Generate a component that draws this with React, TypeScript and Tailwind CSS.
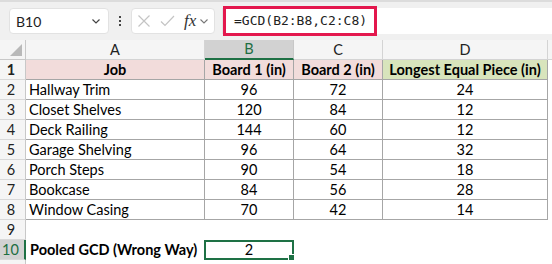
import React from "react";

const rows = [
  { job: "Hallway Trim", b1: 96, b2: 72, d: 24 },
  { job: "Closet Shelves", b1: 120, b2: 84, d: 12 },
  { job: "Deck Railing", b1: 144, b2: 60, d: 12 },
  { job: "Garage Shelving", b1: 96, b2: 64, d: 32 },
  { job: "Porch Steps", b1: 90, b2: 54, d: 18 },
  { job: "Bookcase", b1: 84, b2: 56, d: 28 },
  { job: "Window Casing", b1: 70, b2: 42, d: 14 },
];

function RowHead({ n, active }: { n: number; active?: boolean }) {
  return (
    <div
      className={
        "w-[26px] h-full shrink-0 flex items-center justify-center pr-[3px] border-b border-[#d9d9d9] " +
        (active
          ? "bg-[#d2d2d2] text-[#1e6e42] border-r-2 border-r-[#1e7145]"
          : "bg-[#f5f5f5] text-[#222] border-r border-r-[#c8c8c8]")
      }
    >
      {n}
    </div>
  );
}

export default function App() {
  return (
    <div
      className="w-[552px] h-[264px] overflow-hidden bg-white text-[14.5px] text-black"
      style={{ fontFamily: "Lato, 'Open Sans', sans-serif" }}
    >
      {/* Formula bar */}
      <div className="h-[40px] bg-[#f0f0f0] border-t-2 border-[#dcdcdc] flex items-start pt-[6px] relative">
        <div className="ml-[9px] w-[100px] h-[26px] bg-white rounded-[4px] border border-[#e2e2e2] flex items-center justify-between pl-[6px] pr-[6px] text-[14px] text-[#222]">
          <span>B10</span>
          <svg width="12" height="12" viewBox="0 0 12 12" fill="none" stroke="#444" strokeWidth="1.2">
            <path d="M2.5 4.5 L6 8 L9.5 4.5" />
          </svg>
        </div>
        <div className="w-[22px] h-[26px] flex flex-col items-center justify-center gap-[2px]">
          <span className="w-[2px] h-[2px] bg-[#444]" />
          <span className="w-[2px] h-[2px] bg-[#444]" />
          <span className="w-[2px] h-[2px] bg-[#444]" />
        </div>
        <div className="w-[84px] h-[26px] bg-white rounded-[4px] border border-[#e2e2e2] flex items-center pl-[5px] gap-[9px]">
          <svg width="14" height="14" viewBox="0 0 14 14" stroke="#c4c4c4" strokeWidth="1.2" fill="none">
            <path d="M1.5 1.5 L12.5 12.5 M12.5 1.5 L1.5 12.5" />
          </svg>
          <svg width="15" height="14" viewBox="0 0 15 14" stroke="#c4c4c4" strokeWidth="1.2" fill="none">
            <path d="M1 7.5 L5 11.5 L14 2" />
          </svg>
          <div className="flex items-center gap-[3px]">
            <span className="italic text-[17px] text-[#333]" style={{ fontFamily: "'Liberation Serif', serif" }}>
              fx
            </span>
            <svg width="10" height="10" viewBox="0 0 10 10" fill="none" stroke="#777" strokeWidth="1.1">
              <path d="M1.5 3.5 L5 7 L8.5 3.5" />
            </svg>
          </div>
        </div>
        <div className="ml-[7px] flex-1 h-[26px] bg-white border-l border-[#e2e2e2] flex items-center">
          <div
            className="-mt-[1px] h-[30px] w-[154px] border-[3px] border-[#e3174d] flex items-center pl-[8px] text-[13px] text-[#222]"
            style={{ fontFamily: "'DejaVu Sans Mono', monospace" }}
          >
            =GCD(B2:B8,C2:C8)
          </div>
        </div>
      </div>

      {/* Column headers */}
      <div className="h-[20px] flex bg-[#f5f5f5] text-[#222]">
        <div className="w-[26px] shrink-0 border-r border-b border-[#c8c8c8] relative">
          <svg className="absolute right-[3px] bottom-[3px]" width="12" height="12" viewBox="0 0 12 12">
            <path d="M12 0 L12 12 L0 12 Z" fill="#b9b9b9" />
          </svg>
        </div>
        <div className="w-[179px] shrink-0 flex items-center justify-center border-r border-b border-[#d4d4d4]">A</div>
        <div className="w-[89px] shrink-0 flex items-center justify-center bg-[#d2d2d2] text-[#1e6e42] border-r border-r-[#c8c8c8] border-b-2 border-b-[#1e7145]">
          B
        </div>
        <div className="w-[89px] shrink-0 flex items-center justify-center border-r border-b border-[#d4d4d4]">C</div>
        <div className="w-[165px] shrink-0 flex items-center justify-center border-r border-b border-[#d4d4d4]">D</div>
        <div className="flex-1 border-b border-[#d4d4d4]" />
      </div>

      {/* Row 1: headers */}
      <div className="h-[20px] flex font-bold">
        <RowHead n={1} />
        <div className="w-[179px] shrink-0 flex items-center justify-center bg-[#f2dcdb] border-r border-b border-[#a6a6a6]">Job</div>
        <div className="w-[89px] shrink-0 flex items-center justify-center bg-[#f2dcdb] border-r border-b border-[#a6a6a6]">Board 1 (in)</div>
        <div className="w-[89px] shrink-0 flex items-center justify-center bg-[#f2dcdb] border-r border-b border-[#a6a6a6]">Board 2 (in)</div>
        <div className="w-[165px] shrink-0 flex items-center justify-center bg-[#d8e4bc] border-r border-b border-[#a6a6a6]">Longest Equal Piece (in)</div>
      </div>

      {rows.map((r, i) => (
        <div key={r.job} className="h-[20px] flex">
          <RowHead n={i + 2} />
          <div className="w-[179px] shrink-0 flex items-center pl-[3px] border-r border-b border-[#a6a6a6]">{r.job}</div>
          <div className="w-[89px] shrink-0 flex items-center justify-center border-r border-b border-[#a6a6a6]">{r.b1}</div>
          <div className="w-[89px] shrink-0 flex items-center justify-center border-r border-b border-[#a6a6a6]">{r.b2}</div>
          <div className="w-[165px] shrink-0 flex items-center justify-center border-r border-b border-[#a6a6a6]">{r.d}</div>
        </div>
      ))}

      {/* Row 9 */}
      <div className="h-[20px] flex">
        <RowHead n={9} />
      </div>

      {/* Row 10 */}
      <div className="h-[20px] flex">
        <RowHead n={10} active />
        <div className="w-[178px] shrink-0 flex items-center pl-[4px] font-bold">Pooled GCD (Wrong Way)</div>
        <div className="w-[90px] shrink-0 relative flex items-center justify-center border-2 border-[#1e7145]">
          2
          <span className="absolute -right-[3px] -bottom-[3px] w-[5px] h-[5px] bg-[#1e7145] border border-white box-content" />
        </div>
      </div>

      <div className="h-[4px] flex">
        <div className="w-[26px] bg-[#f5f5f5] border-r border-[#c8c8c8]" />
      </div>
    </div>
  );
}
